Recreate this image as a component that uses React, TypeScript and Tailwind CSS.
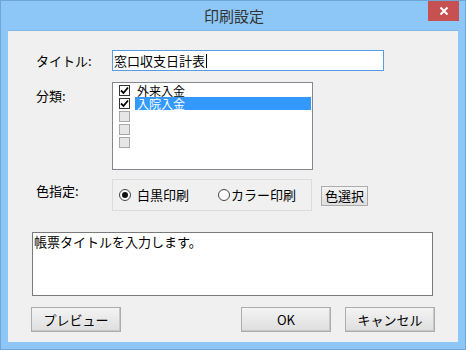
import React from 'react';

const FONT = "font-['MS_UI_Gothic','Noto_Sans_CJK_JP',sans-serif]";

const ITEMS = [
    { label: '外来入金', checked: true, selected: false },
    { label: '入院入金', checked: true, selected: true },
    { label: '', checked: false, selected: false },
    { label: '', checked: false, selected: false },
    { label: '', checked: false, selected: false },
];

function CheckBox({ checked }: { checked: boolean }) {
    if (!checked) {
        return <div className="w-[11px] h-[11px] border border-[#a8a8a8] bg-[#e6e6e6]" />;
    }
    return (
        <div className="w-[11px] h-[11px] border border-[#333] bg-white flex items-center justify-center">
            <svg width="9" height="9" viewBox="0 0 9 9">
                <path d="M1 4.5 L3.5 7 L8 1.5" stroke="#000" strokeWidth="1.8" fill="none" />
            </svg>
        </div>
    );
}

function Radio({ on }: { on: boolean }) {
    return (
        <div className="w-[12px] h-[12px] rounded-full border border-[#444] bg-white flex items-center justify-center">
            {on && <div className="w-[6px] h-[6px] rounded-full bg-[#111]" />}
        </div>
    );
}

function Button({ children, className }: { children: React.ReactNode; className?: string }) {
    return (
        <div
            className={
                'h-[25px] w-[90px] flex items-center justify-center border border-[#acacac] bg-gradient-to-b from-[#f4f4f4] to-[#dedede] shadow-[inset_-1px_-1px_0_#c8c8c8] text-[13px] text-black ' +
                (className ?? '')
            }
        >
            {children}
        </div>
    );
}

export default function App() {
    return (
        <div className={`w-[466px] h-[350px] flex flex-col bg-[#8cc7f7] border border-[#6fa6d8] ${FONT}`}>
            {/* title bar */}
            <div className="h-[29px] flex items-start relative">
                <div className="flex-1 text-center text-[15px] leading-[29px] text-[#333] pl-[2px]">印刷設定</div>
                <div className="absolute right-[6px] top-0 w-[31px] h-[20px] bg-[#c75050] flex items-center justify-center">
                    <svg width="10" height="10" viewBox="0 0 10 10">
                        <path d="M1.5 1.5 L8.5 8.5 M8.5 1.5 L1.5 8.5" stroke="#fff" strokeWidth="2" />
                    </svg>
                </div>
            </div>

            {/* client */}
            <div className="flex-1 mx-[7px] mb-[7px] bg-[#f0f0f0] border-t border-[#7fb6e6] px-[23px] text-[13px] text-black flex flex-col">
                <div className="mt-[19px] flex items-center">
                    <div className="w-[81px] pl-[5px]">タイトル:</div>
                    <div className="w-[272px] h-[21px] border border-[#569de5] bg-white flex items-center pl-[1px] text-[13px]">
                        窓口収支日計表<span className="w-px h-[14px] bg-black ml-px" />
                    </div>
                </div>

                <div className="mt-[11px] flex items-start">
                    <div className="w-[81px] pl-[5px] pt-[4px]">分類:</div>
                    <div className="w-[201px] h-[88px] border border-[#828790] bg-white pt-[1px] pl-[6px] pr-[1px]">
                        {ITEMS.map((it, i) => (
                            <div key={i} className="h-[13px] flex items-center">
                                <CheckBox checked={it.checked} />
                                {it.label && (
                                    <div
                                        className={
                                            'ml-[5px] flex-1 h-[13px] leading-[13px] text-[12px] pl-[2px] ' +
                                            (it.selected ? 'bg-[#3399ff] text-white' : '')
                                        }
                                    >
                                        {it.label}
                                    </div>
                                )}
                            </div>
                        ))}
                    </div>
                </div>

                <div className="mt-[9px] flex items-start">
                    <div className="w-[81px] pl-[5px] pt-[2px]">色指定:</div>
                    <div className="w-[200px] h-[32px] border border-[#dcdcdc] flex items-center pl-[6px]">
                        <Radio on />
                        <span className="ml-[6px]">白黒印刷</span>
                        <span className="ml-[29px]"><Radio on={false} /></span>
                        <span className="ml-[1px]">カラー印刷</span>
                    </div>
                    <div className="ml-[9px] mt-[7px] w-[47px] h-[20px] border border-[#acacac] bg-gradient-to-b from-[#f4f4f4] to-[#dedede] flex items-center justify-center">
                        色選択
                    </div>
                </div>

                <div className="mt-[21px] ml-px w-[401px] h-[64px] border border-[#7a7a7a] bg-white pl-px pt-px leading-[15px]">
                    帳票タイトルを入力します。
                </div>

                <div className="mt-[11px] flex">
                    <Button>プレビュー</Button>
                    <Button className="ml-[120px]">OK</Button>
                    <Button className="ml-[14px]">キャンセル</Button>
                </div>
            </div>
        </div>
    );
}
